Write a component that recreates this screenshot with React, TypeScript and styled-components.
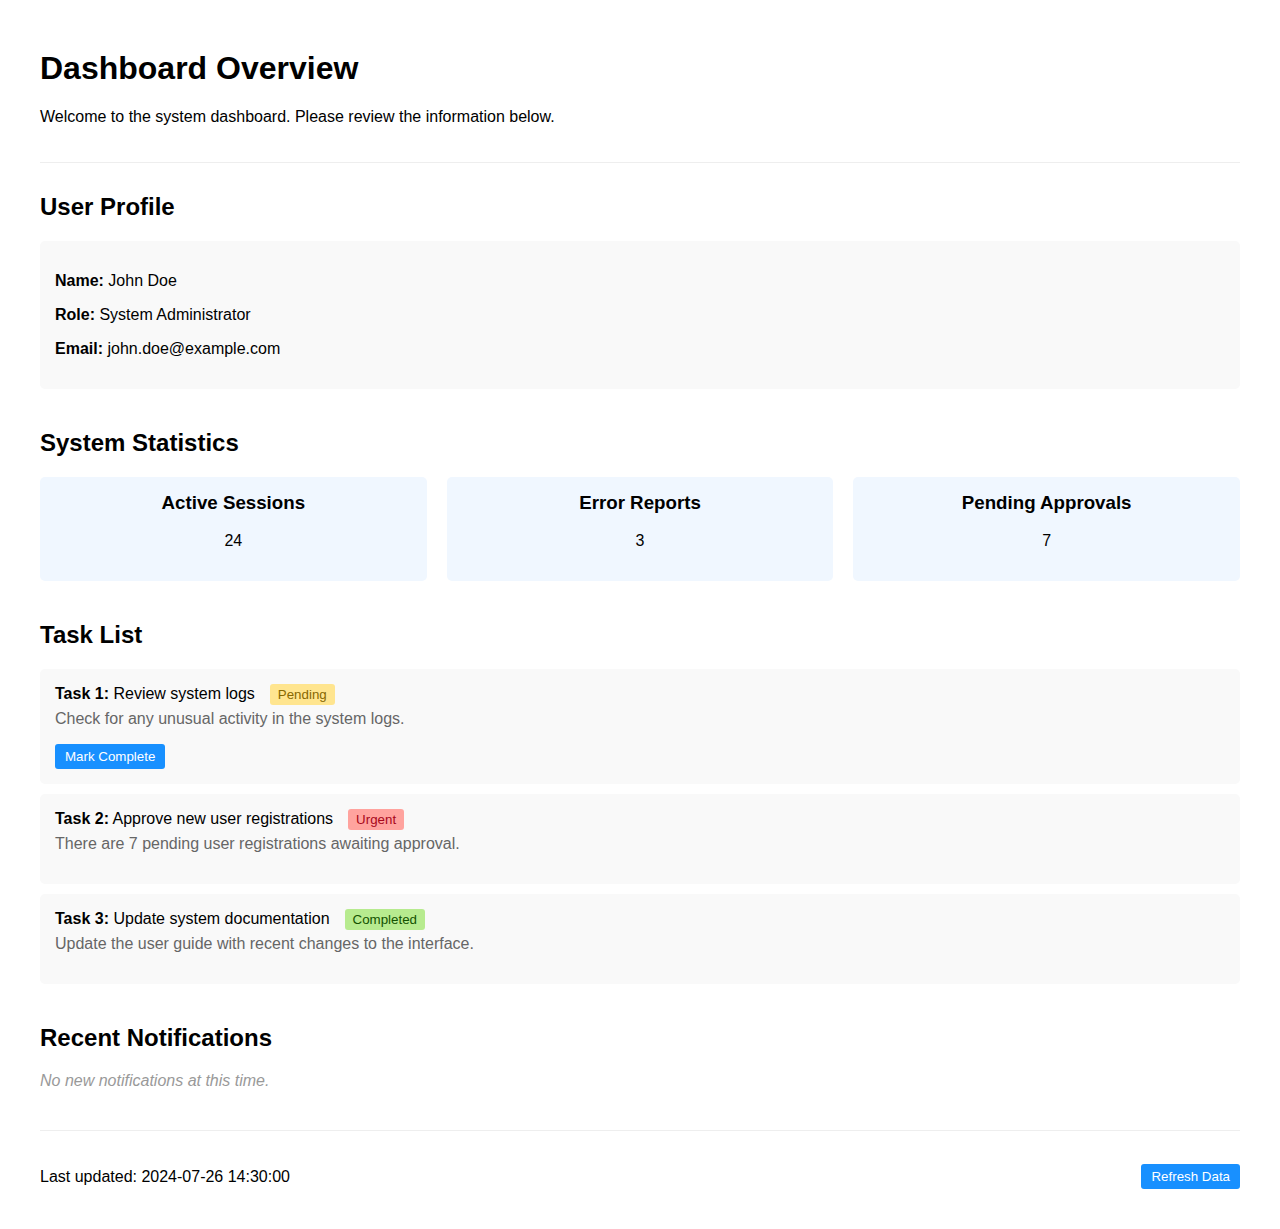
import styled, { createGlobalStyle } from "styled-components";

const GlobalStyle = createGlobalStyle`
  body {
    margin: 0;
    background: #fff;
    color: #000;
    font-family: "Liberation Sans", Arial, sans-serif;
  }
`;

const Page = styled.div`
  padding: 49.6px 40px 40px;
`;

const Header = styled.header`
  padding-bottom: 20px;
  border-bottom: 1px solid #eee;
  margin-bottom: 30px;
`;

const Title = styled.h1`
  font-size: 32px;
  font-weight: 700;
  margin: 0 0 21.44px;
`;

const Intro = styled.p`
  font-size: 16px;
  margin: 0 0 16px;
`;

const Section = styled.section`
  margin-bottom: 40px;
`;

const SectionTitle = styled.h2`
  font-size: 24px;
  font-weight: 700;
  margin: 0 0 20px;
`;

const ProfileBox = styled.div`
  background: #f9f9f9;
  border-radius: 5px;
  padding: 15px;
  p {
    margin: 16px 0;
    font-size: 16px;
  }
`;

const StatsGrid = styled.div`
  display: grid;
  grid-template-columns: repeat(3, 1fr);
  gap: 20px;
`;

const StatCard = styled.div`
  background: #f0f7ff;
  border-radius: 5px;
  padding: 15px;
  text-align: center;
  h3 {
    font-size: 18.72px;
    margin: 0 0 18px;
  }
  p {
    font-size: 16px;
    margin: 0 0 16px;
  }
`;

const TaskStack = styled.div`
  display: flex;
  flex-direction: column;
  gap: 10px;
`;

const TaskCard = styled.div`
  background: #f9f9f9;
  border-radius: 5px;
  padding: 15px;
`;

const TaskHead = styled.div`
  display: flex;
  align-items: baseline;
  font-size: 16px;
`;

type Status = "pending" | "urgent" | "completed";

const badgeColors: Record<Status, { bg: string; fg: string }> = {
  pending: { bg: "#ffe58f", fg: "#876800" },
  urgent: { bg: "#ffa39e", fg: "#a8071a" },
  completed: { bg: "#b7eb8f", fg: "#135200" },
};

const Badge = styled.span<{ $status: Status }>`
  margin-left: 15px;
  padding: 3px 8px;
  font-size: 13.33px;
  border-radius: 3px;
  background: ${(p) => badgeColors[p.$status].bg};
  color: ${(p) => badgeColors[p.$status].fg};
`;

const TaskDesc = styled.p`
  margin: 5px 0 16px;
  font-size: 16px;
  color: #666;
`;

const Button = styled.button`
  font-family: inherit;
  font-size: 13.33px;
  padding: 5px 10px;
  background: #1890ff;
  color: #fff;
  border: none;
  border-radius: 3px;
  cursor: pointer;
`;

const Empty = styled.p`
  margin: 0;
  font-size: 16px;
  font-style: italic;
  color: #999;
`;

const Footer = styled.footer`
  border-top: 1px solid #eee;
  padding-top: 33px;
  display: flex;
  justify-content: space-between;
  align-items: center;
  font-size: 16px;
`;

const tasks: { id: number; title: string; desc: string; status: Status; label: string; action?: boolean }[] = [
  { id: 1, title: "Review system logs", desc: "Check for any unusual activity in the system logs.", status: "pending", label: "Pending", action: true },
  { id: 2, title: "Approve new user registrations", desc: "There are 7 pending user registrations awaiting approval.", status: "urgent", label: "Urgent" },
  { id: 3, title: "Update system documentation", desc: "Update the user guide with recent changes to the interface.", status: "completed", label: "Completed" },
];

const stats = [
  { label: "Active Sessions", value: 24 },
  { label: "Error Reports", value: 3 },
  { label: "Pending Approvals", value: 7 },
];

export default function App() {
  return (
    <>
      <GlobalStyle />
      <Page>
        <Header>
          <Title>Dashboard Overview</Title>
          <Intro>Welcome to the system dashboard. Please review the information below.</Intro>
        </Header>

        <Section>
          <SectionTitle>User Profile</SectionTitle>
          <ProfileBox>
            <p><strong>Name:</strong> John Doe</p>
            <p><strong>Role:</strong> System Administrator</p>
            <p><strong>Email:</strong> john.doe@example.com</p>
          </ProfileBox>
        </Section>

        <Section>
          <SectionTitle>System Statistics</SectionTitle>
          <StatsGrid>
            {stats.map((s) => (
              <StatCard key={s.label}>
                <h3>{s.label}</h3>
                <p>{s.value}</p>
              </StatCard>
            ))}
          </StatsGrid>
        </Section>

        <Section>
          <SectionTitle>Task List</SectionTitle>
          <TaskStack>
            {tasks.map((t) => (
              <TaskCard key={t.id}>
                <TaskHead>
                  <span><strong>Task {t.id}:</strong> {t.title}</span>
                  <Badge $status={t.status}>{t.label}</Badge>
                </TaskHead>
                <TaskDesc>{t.desc}</TaskDesc>
                {t.action && <Button>Mark Complete</Button>}
              </TaskCard>
            ))}
          </TaskStack>
        </Section>

        <Section>
          <SectionTitle>Recent Notifications</SectionTitle>
          <Empty>No new notifications at this time.</Empty>
        </Section>

        <Footer>
          <span>Last updated: 2024-07-26 14:30:00</span>
          <Button>Refresh Data</Button>
        </Footer>
      </Page>
    </>
  );
}
